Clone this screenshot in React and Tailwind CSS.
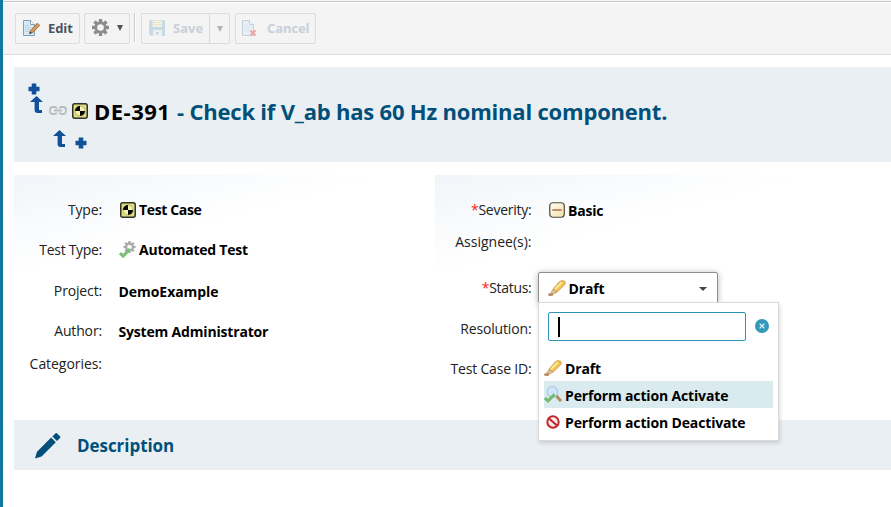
import React from "react";

function TestCaseIcon() {
  return (
    <svg width="16" height="16" viewBox="0 0 16 16" className="shrink-0">
      <rect x="0.75" y="0.75" width="14.5" height="14.5" rx="2" fill="#dedb80" stroke="#33332a" strokeWidth="1.5" />
      <circle cx="8" cy="8" r="5" fill="#f6f3b0" stroke="#8a8850" strokeWidth="0.5" />
      <path d="M8 8V3A5 5 0 0 0 3 8ZM8 8V13A5 5 0 0 0 13 8Z" fill="#050505" />
    </svg>
  );
}

function GearPath({ color, hole }) {
  return (
    <g>
      <g fill={color}>
        {[0, 45, 90, 135].map((a) => (
          <rect key={a} x="6.4" y="0" width="3.2" height="16" transform={`rotate(${a} 8 8)`} />
        ))}
        <circle cx="8" cy="8" r="5.8" />
      </g>
      <circle cx="8" cy="8" r="3.1" fill={hole} />
    </g>
  );
}

function AutomatedIcon() {
  return (
    <svg width="17" height="17" viewBox="0 0 17 17" className="shrink-0">
      <g transform="translate(4.5 0) scale(.75)"><GearPath color="#a9a9a9" hole="#f9fbfc" /></g>
      <path d="M1 12.2L4.2 15L11 8" fill="none" stroke="#7fc078" strokeWidth="3.2" />
    </svg>
  );
}

function DraftIcon() {
  return (
    <svg width="18" height="16" viewBox="0 0 18 16" className="shrink-0">
      <path d="M5 9.2L11.6 1.5Q14.5 -.2 16.8 1.4Q18 3 16.6 4.8L9 12.2Z" fill="#f0c452" stroke="#d39a45" strokeWidth=".9" />
      <path d="M7 9.3L13.8 2.4" stroke="#fdeea6" strokeWidth="1.8" />
      <path d="M5 9.2L9 12.2L5.2 14.2L2.8 12.8Z" fill="#dfc096" stroke="#bb8f5c" strokeWidth=".6" />
      <path d="M.4 13.4H4.8V15.8H.4Z" fill="#b47e46" />
    </svg>
  );
}

function BasicIcon() {
  return (
    <svg width="16" height="16" viewBox="0 0 16 16" className="shrink-0">
      <defs>
        <linearGradient id="basic" x1="0" y1="0" x2="1" y2="1">
          <stop offset="0" stopColor="#fffdf0" /><stop offset="1" stopColor="#f7dfa8" />
        </linearGradient>
      </defs>
      <rect x=".75" y=".75" width="14.5" height="14.5" rx="3" fill="url(#basic)" stroke="#4d4a45" strokeWidth="1.2" />
      <path d="M3.3 8H12.7" stroke="#bd8d6d" strokeWidth="2" />
    </svg>
  );
}

function ActivateIcon() {
  return (
    <svg width="18" height="17" viewBox="0 0 18 17" className="shrink-0">
      <path d="M12 9.5L16.2 14.2" stroke="#b08a63" strokeWidth="3" strokeLinecap="round" />
      <circle cx="8.4" cy="6" r="5.3" fill="#cfe5fa" stroke="#b0c8e2" strokeWidth="1.2" />
      <path d="M.8 12L4 14.9L10.6 8.4" fill="none" stroke="#6dbd6c" strokeWidth="3" />
    </svg>
  );
}

function BanIcon() {
  return (
    <svg width="14" height="14" viewBox="0 0 14 14" className="shrink-0">
      <circle cx="7" cy="7" r="5.7" fill="#fbeaea" stroke="#c4282d" strokeWidth="2" />
      <path d="M3 3.4L11 10.6" stroke="#c4282d" strokeWidth="2" />
    </svg>
  );
}

function PageIcon({ children }) {
  return (
    <svg width="18" height="17" viewBox="0 0 18 17" className="shrink-0">
      <path d="M.5 .5H7.5L11.5 4.5V15.5H.5Z" fill="#d7e8f5" stroke="#7c9fbd" />
      <path d="M7.5 .5V4.5H11.5" fill="#fff" stroke="#7c9fbd" />
      <path d="M2 5.5H6M2 7.5H8M2 9.5H7M2 11.5H7" stroke="#b5cde0" strokeWidth=".8" />
      {children}
    </svg>
  );
}

function SaveIcon() {
  return (
    <svg width="16" height="16" viewBox="0 0 16 16" className="shrink-0">
      <path d="M1 0H15L16 1V16H2L0 14V1Z" fill="#6a9cc9" />
      <rect x="3.5" y="0.5" width="9.5" height="6.5" fill="#f4eda8" />
      <path d="M4 2.5H12.5M4 4.5H12.5" stroke="#d8cf85" />
      <rect x="4" y="10" width="9" height="6" fill="#e4eaf0" />
      <rect x="7" y="12" width="2.5" height="2.5" fill="#5d7f9f" />
    </svg>
  );
}

function UpArrow() {
  return (
    <svg width="13" height="17" viewBox="0 0 13 17" className="shrink-0">
      <path d="M6.5 0L13 6H9V14H12V17H7.5Q4.6 17 4.6 14V6H0Z" fill="#10519a" />
    </svg>
  );
}

function Plus() {
  return (
    <svg width="12" height="12" viewBox="0 0 12 12" className="shrink-0">
      <path d="M3.7 .5H8.3V3.7H11.5V8.3H8.3V11.5H3.7V8.3H.5V3.7H3.7Z" fill="#10519a" />
    </svg>
  );
}

function LinkIcon() {
  return (
    <svg width="18" height="9" viewBox="0 0 18 9" className="shrink-0">
      <path d="M7.6 2.8V2.4Q7.2 1 5.6 1H3.4Q1 1 1 4.5T3.4 8H5.6Q7.2 8 7.6 6.6M10.4 2.4Q10.8 1 12.4 1H14.6Q17 1 17 4.5T14.6 8H12.4Q10.8 8 10.4 6.6M5 4.5H13" fill="none" stroke="#bcbcbc" strokeWidth="1.8" />
    </svg>
  );
}

function Row({ h, w, label, labelClass = "tracking-[-0.15px]", required, children }) {
  return (
    <div className={"flex items-center " + h}>
      <div className={"shrink-0 flex justify-end pb-[2px] whitespace-nowrap text-[14px] text-[#222] " + w + " " + labelClass}>
        {required && <span className="text-[#f22]">*</span>}
        <span>{label}</span>
      </div>
      {children}
    </div>
  );
}

function Value({ className = "tracking-[-0.18px]", children }) {
  return (
    <div className={"flex items-center whitespace-nowrap text-[14px] font-bold text-black " + className}>
      {children}
    </div>
  );
}

const option = "h-[27px] flex items-center whitespace-nowrap tracking-[-0.15px]";
const panel = "pt-[15px] bg-[linear-gradient(to_bottom_right,#f1f5f9,#ffffff_52%)] bg-[length:361px_97px] bg-no-repeat";

export default function App() {
  return (
    <div className="relative w-[891px] h-[507px] overflow-hidden bg-white border-l-[3px] border-[#12779c] font-['Open_Sans','Noto_Sans',sans-serif]">
      <header className="h-[55px] bg-[#f4f4f4] border-b border-[#dcdcdc]">
        <div className="h-[3px] border-b border-white"><div className="h-[2px] border-b border-[#c8c8c8]" /></div>
        <div className="flex pl-[12px] pt-[10px] text-[13px] font-bold text-[#4c555e]">
          <button className="w-[65px] h-[31px] flex items-center border border-[#dcdcdc] rounded-[2px] pl-[7px] gap-[7px]">
            <PageIcon><path d="M6.5 13.5L7.5 10.5L14 3.3L16.8 5.3L10 12.5Z" fill="#d79a5b" stroke="#8a5a30" strokeWidth=".7" /><path d="M6.2 14L7.2 11.6L8.8 13Z" fill="#333" /></PageIcon>
            <span className="pt-px tracking-[-0.1px]">Edit</span>
          </button>
          <button className="ml-[4px] w-[46px] h-[31px] flex items-center border border-[#dcdcdc] rounded-[2px] pl-[7px] pb-[2px]">
            <svg width="17" height="17" viewBox="0 0 16 16"><GearPath color="#8c8c8c" hole="#f4f4f4" /></svg>
            <svg className="ml-[8px]" width="6" height="6" viewBox="0 0 6 6"><path d="M0 0H6L3 6Z" fill="#555" /></svg>
          </button>
          <div className="ml-[4px] w-[2px] h-[29px] bg-[#c8c8c8] border-r border-white" />
          <div className="ml-[5px] w-[89px] h-[31px] flex border border-[#dcdcdc] rounded-[2px] text-[#c8d0d8]">
            <div className="w-[68px] flex items-center pl-[7px] gap-[8px] border-r border-[#d8d8d8]"><span className="pb-px opacity-30"><SaveIcon /></span><span className="pt-px">Save</span></div>
            <div className="flex-1 flex items-center justify-center"><svg width="6" height="6" viewBox="0 0 6 6"><path d="M0 0H6L3 6Z" fill="#b4b4b4" /></svg></div>
          </div>
          <button className="ml-[5px] w-[81px] h-[31px] flex items-center border border-[#dcdcdc] rounded-[2px] pl-[6px] gap-[7px] text-[#c8d0d8]">
            <span className="opacity-40"><PageIcon><path d="M8.5 10.5L13.5 15.5M13.5 10.5L8.5 15.5" stroke="#d33" strokeWidth="1.9" /></PageIcon></span>
            <span className="pt-px tracking-[-0.1px]">Cancel</span>
          </button>
        </div>
      </header>

      <section className="ml-[11px] mt-[12px] h-[95px] bg-[#eaeff3] flex items-start">
        <div className="w-[80px] h-full shrink-0 flex flex-col">
          <div className="pl-[14px] pt-[16px] h-[29px]"><Plus /></div>
          <div className="flex pl-[16px] h-[32px]"><UpArrow /><div className="pl-[6px] pt-[10px]"><LinkIcon /></div><div className="pl-[5px] pt-[7px]"><TestCaseIcon /></div></div>
          <div className="flex pl-[39px] pt-[2px]"><UpArrow /><div className="pl-[9px] pt-[7px]"><Plus /></div></div>
        </div>
        <h1 className="pt-[29px] flex text-[22px] leading-[30px] whitespace-nowrap font-bold">
          <span className="w-[83px] shrink-0 tracking-[0.5px] text-black">DE-391</span>
          <span className="tracking-[-0.2px] text-[#00507a]">- Check if V_ab has 60 Hz nominal component.</span>
        </h1>
      </section>

      <main className="ml-[11px] mt-[13px] h-[245px] flex">
        <div className={"w-[421px] " + panel}>
          <Row h="h-[40px]" w="w-[88px]" label="Type:">
            <Value className="pl-[18px] pb-px tracking-[-0.35px]"><TestCaseIcon /><span className="pl-[3px]">Test Case</span></Value>
          </Row>
          <Row h="h-[40px]" w="w-[88px]" label="Test Type:" labelClass="tracking-[-0.3px]">
            <Value className="pl-[17px] pb-px tracking-[-0.23px]"><AutomatedIcon /><span className="pl-[3px]">Automated Test</span></Value>
          </Row>
          <Row h="h-[42px]" w="w-[88px]" label="Project:"><Value className="pl-[16.5px] tracking-[-0.05px]">DemoExample</Value></Row>
          <Row h="h-[38px]" w="w-[88px]" label="Author:"><Value className="pl-[16.5px] tracking-[-0.18px]">System Administrator</Value></Row>
          <Row h="h-[28px]" w="w-[88px]" label="Categories:" labelClass="tracking-[-0.05px]" />
        </div>
        <div className={"flex-1 " + panel}>
          <Row h="h-[40px]" w="w-[96.5px]" label="Severity:" required labelClass="tracking-[-0.25px]">
            <Value className="pl-[17.5px] tracking-[-0.18px]"><BasicIcon /><span className="pl-[3px]">Basic</span></Value>
          </Row>
          <Row h="h-[24px]" w="w-[96.5px]" label="Assignee(s):" labelClass="" />
          <Row h="h-[68px]" w="w-[96.5px]" label="Status:" required labelClass="tracking-[-0.3px]">
            <div className="ml-[6.5px] w-[180px] h-[32px] pl-[9px] pr-[10px] flex items-center border border-[#8f8f8f] rounded-[2px] bg-white shadow-[0_1px_6px_rgba(0,0,0,0.3)] text-[14px] font-bold text-black">
              <DraftIcon />
              <span className="flex-1 pt-px pl-[2.5px] tracking-[-0.15px]">Draft</span>
              <svg className="mt-[2px]" width="8" height="4" viewBox="0 0 8 4"><path d="M0 0H8L4 4Z" fill="#444" /></svg>
            </div>
          </Row>
          <Row h="h-[14px]" w="w-[96.5px]" label="Resolution:" />
          <Row h="h-[66px]" w="w-[96.5px]" label="Test Case ID:" labelClass="tracking-[-0.18px]" />
        </div>
      </main>

      <section className="ml-[11px] h-[50px] bg-[#eaeff3] flex items-center pl-[20px]">
        <svg width="28" height="28" viewBox="0 0 28 28" className="shrink-0 mt-px">
          <path d="M1 26.5L3 19.8L17.2 5.6L21.8 10.2L7.6 24.4Z" fill="#00507a" />
          <path d="M18.4 4.4L21.6 1.2Q22.2.7 22.8 1.2L26.2 4.6Q26.7 5.2 26.2 5.8L23 9Z" fill="#00507a" />
        </svg>
        <h2 className="pl-[15px] pt-px text-[17px] font-bold text-[#00507a] tracking-[-0.05px]">Description</h2>
      </section>

      {/* Open status menu */}
      <div className="absolute left-[535px] top-[302px] w-[241px] h-[139px] bg-white border border-[#d9d9d9] shadow-[1px_2px_4px_rgba(0,0,0,0.15)] text-[14px] font-bold text-black">
        <div className="flex items-center pl-[9px] pt-[9px]">
          <div className="w-[198px] h-[29px] pl-[9px] flex items-center border border-[#2d93b8] rounded-[2px]">
            <div className="w-[2px] h-[20px] bg-black" />
          </div>
          <svg className="ml-[9px] mb-[2px]" width="14" height="14" viewBox="0 0 14 14">
            <circle cx="7" cy="7" r="7" fill="#3498b8" />
            <path d="M4.6 4.6L9.4 9.4M9.4 4.6L4.6 9.4" stroke="#e4f3f8" strokeWidth="1.3" />
          </svg>
        </div>
        <div className="mt-[13px] ml-[5px] w-[229px]">
          <div className={option}><DraftIcon /><span className="pl-[3px] pt-[2px]">Draft</span></div>
          <div className={option + " bg-[#daebf0]"}><ActivateIcon /><span className="pl-[3px] pt-[2px]">Perform action Activate</span></div>
          <div className={option}><span className="w-[18px] pl-[2px] pt-px"><BanIcon /></span><span className="pl-[3px] pt-[2px]">Perform action Deactivate</span></div>
        </div>
      </div>
    </div>
  );
}
